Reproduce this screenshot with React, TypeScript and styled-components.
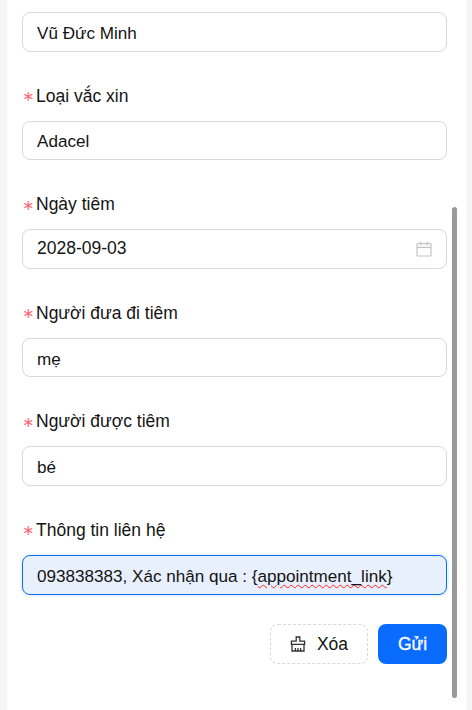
import React from "react"
import styled, { createGlobalStyle } from "styled-components"

const GlobalStyle = createGlobalStyle`
  html, body {
    margin: 0;
    padding: 0;
    height: 710px;
    overflow: hidden;
    background: #f5f5f5;
    font-family: "Liberation Sans", Arial, sans-serif;
  }
`

const Page = styled.div`
  position: relative;
  height: 710px;
  margin: 0 5px 0 7px;
  background: #fff;
  overflow: hidden;
`

const Form = styled.form`
  display: flex;
  flex-direction: column;
  gap: 30px;
  width: 425px;
  padding: 12px 0 0 15px;
`

const Item = styled.div`
  display: flex;
  flex-direction: column;
  gap: 12px;
`

const Label = styled.label`
  display: flex;
  align-items: center;
  box-sizing: border-box;
  height: 27px;
  padding-top: 2px;
  font-size: 17.5px;
  color: #141414;
`

const Star = styled.span`
  width: 14px;
  font-size: 14.5px;
  font-family: "DejaVu Sans", sans-serif;
  color: #ff6b78;
`

const Field = styled.div<{ $active?: boolean; $date?: boolean }>`
  display: flex;
  align-items: center;
  justify-content: space-between;
  box-sizing: border-box;
  height: 39.6px;
  padding: ${(p) => (p.$date ? "0" : "4px")} 14px 0 14px;
  border: 1px solid ${(p) => (p.$active ? "#0a6cf5" : "#d9d9d9")};
  border-radius: 8px;
  background: ${(p) => (p.$active ? "#e8f0fe" : "#fff")};
  box-shadow: ${(p) => (p.$active ? "0 0 0 2px rgba(5, 145, 255, 0.08)" : "none")};
  font-size: ${(p) => (p.$date ? "17.5px" : "17.1px")};
  color: #141414;
`

const Misspelled = styled.span`
  text-decoration: underline wavy #ff2020 1.2px;
  text-underline-offset: 2px;
`

const Actions = styled.div`
  display: flex;
  justify-content: flex-end;
  gap: 10px;
  margin-top: -1px;
`

const ResetButton = styled.button`
  display: flex;
  align-items: center;
  justify-content: center;
  gap: 11px;
  width: 98px;
  height: 40px;
  padding: 1px 0 0;
  border: 1px dashed #d9d9d9;
  border-radius: 8px;
  background: #fff;
  font-family: inherit;
  font-size: 17.5px;
  color: #141414;
`

const SubmitButton = styled.button`
  width: 69px;
  height: 40px;
  padding: 2px 0 0;
  border: 0;
  border-radius: 8px;
  background: #0a6cff;
  font-family: inherit;
  font-size: 17.5px;
  -webkit-text-stroke: 0.3px #fff;
  color: #fff;
`

const Scrollbar = styled.div`
  position: absolute;
  top: 207px;
  left: 445px;
  width: 5px;
  height: 491px;
  border-radius: 3px;
  background: #999;
`

const CalendarIcon = () => (
  <svg width="16" height="16" viewBox="0 0 16 16" fill="none" stroke="#c4c4c4" strokeWidth="1.2">
    <rect x="1" y="2.6" width="14" height="12.4" rx="1" />
    <path d="M1 6.4h14M4.6 .8v3.2M11.4 .8v3.2" />
  </svg>
)

const ClearIcon = () => (
  <svg width="16" height="16" viewBox="0 0 16 16" fill="none" stroke="#333" strokeWidth="1.3">
    <path d="M6.2 1h3.6v4.2h4.8v3.2H1.4V5.2h4.8z" />
    <path d="M2 8.4V15h12V8.4M5.4 15v-3M8 15v-3M10.6 15v-3" />
  </svg>
)

const fields = [
  { label: "Loại vắc xin", value: "Adacel" },
  { label: "Ngày tiêm", value: "2028-09-03", date: true },
  { label: "Người đưa đi tiêm", value: "mẹ" },
  { label: "Người được tiêm", value: "bé" },
]

const App = () => {
  return (
    <Page>
      <GlobalStyle />
      <Form>
        <Field>Vũ Đức Minh</Field>
        {fields.map((f) => (
          <Item key={f.label}>
            <Label>
              <Star>∗</Star>
              {f.label}
            </Label>
            <Field $date={f.date}>
              {f.value}
              {f.date && <CalendarIcon />}
            </Field>
          </Item>
        ))}
        <Item>
          <Label>
            <Star>∗</Star>
            Thông tin liên hệ
          </Label>
          <Field $active>
            <span>
              093838383, Xác nhận qua : {"{"}
              <Misspelled>appointment_link</Misspelled>
              {"}"}
            </span>
          </Field>
        </Item>
        <Actions>
          <ResetButton type="button">
            <ClearIcon />
            Xóa
          </ResetButton>
          <SubmitButton type="button">Gửi</SubmitButton>
        </Actions>
      </Form>
      <Scrollbar />
    </Page>
  )
}

export default App
